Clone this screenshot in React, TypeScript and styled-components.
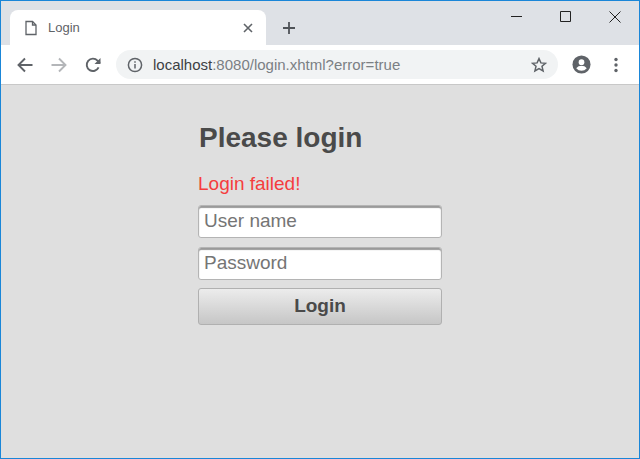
import * as React from "react";
import styled, { createGlobalStyle } from "styled-components";

const GlobalStyle = createGlobalStyle`
  html, body {
    margin: 0;
    padding: 0;
    height: 100%;
    overflow: hidden;
  }
  #root {
    height: 100%;
  }
`;

const Window = styled.div`
  box-sizing: border-box;
  width: 640px;
  height: 459px;
  display: flex;
  flex-direction: column;
  border: 1px solid #1a86d8;
  background: #dfdfdf;
  font-family: "Liberation Sans", Arial, sans-serif;
`;

const TabStrip = styled.div`
  height: 44px;
  flex: none;
  display: flex;
  align-items: flex-end;
  background: #dee1e6;
  padding-left: 9px;
`;

const Tab = styled.div`
  width: 256px;
  height: 35px;
  box-sizing: border-box;
  display: flex;
  align-items: center;
  padding: 0 13px 0 14px;
  background: #fff;
  border-radius: 8px 8px 0 0;
  font-size: 13px;
  color: #5f6368;
`;

const TabTitle = styled.span`
  flex: 1;
  margin-left: 10px;
`;

const NewTab = styled.div`
  width: 16px;
  height: 35px;
  margin-left: 16px;
  display: flex;
  align-items: center;
`;

const WindowControls = styled.div`
  margin-left: auto;
  align-self: flex-start;
  display: flex;
`;

const WindowButton = styled.div`
  width: 49px;
  height: 31px;
  display: flex;
  align-items: center;
  justify-content: center;
`;

const Toolbar = styled.div`
  height: 39px;
  flex: none;
  display: flex;
  align-items: center;
  background: #fff;
  border-bottom: 1px solid #c8c8c8;
  padding: 0 0 0 14px;
`;

const NavButton = styled.div`
  width: 20px;
  height: 20px;
  margin-right: 14px;
  display: flex;
  align-items: center;
  justify-content: center;
`;

const Omnibox = styled.div`
  width: 442px;
  height: 29px;
  margin-left: -1px;
  box-sizing: border-box;
  display: flex;
  align-items: center;
  padding: 0 11px;
  background: #f1f3f4;
  border-radius: 15px;
  font-size: 15px;
  color: #7b7f84;
`;

const Url = styled.span`
  flex: 1;
  margin-left: 10px;
`;

const Host = styled.span`
  color: #3c4043;
`;

const ToolbarEnd = styled.div`
  display: flex;
  align-items: center;
  margin-left: 14px;
  gap: 23px;
`;

const Page = styled.main`
  flex: 1;
  display: flex;
  justify-content: center;
`;

const LoginForm = styled.form`
  width: 244px;
  display: flex;
  flex-direction: column;
`;

const Heading = styled.h1`
  margin: 37px 0 0 1px;
  font-size: 28px;
  line-height: 32px;
  font-weight: bold;
  color: #4a4a4a;
`;

const ErrorMessage = styled.div`
  margin: 19px 0 1px;
  font-size: 19px;
  line-height: 22px;
  color: #f53d3d;
`;

const TextInput = styled.input`
  box-sizing: border-box;
  width: 100%;
  height: 33px;
  margin-top: 9px;
  padding: 0 5px 2px;
  border: 1px solid #b4b4b4;
  border-radius: 3px;
  box-shadow: inset 0 2px 1px #9a9a9a;
  background: #fff;
  font-family: inherit;
  font-size: 19px;
  outline: none;

  &::placeholder {
    color: #757575;
    opacity: 1;
  }
`;

const SubmitButton = styled.button`
  box-sizing: border-box;
  width: 100%;
  height: 37px;
  margin-top: 8px;
  padding: 0 0 2px;
  border: 1px solid #b0b0b0;
  border-radius: 3px;
  background: linear-gradient(#ececec, #c6c6c6);
  font-family: inherit;
  font-size: 19px;
  font-weight: bold;
  color: #4a4a4a;
`;

const App = () => {
  return (
    <Window>
      <GlobalStyle />
      <TabStrip>
        <Tab>
          <svg width="14" height="16" viewBox="0 0 14 16" fill="none" stroke="#5f6368" strokeWidth="1.3">
            <path d="M2 1.5h6.5l3.5 3.5v9.5H2z" />
            <path d="M8.5 1.5V5H12" />
          </svg>
          <TabTitle>Login</TabTitle>
          <svg width="10" height="10" viewBox="0 0 10 10" stroke="#5f6368" strokeWidth="1.6">
            <path d="M1 1l8 8M9 1l-8 8" />
          </svg>
        </Tab>
        <NewTab>
          <svg width="14" height="14" viewBox="0 0 14 14" stroke="#4f5358" strokeWidth="1.8">
            <path d="M7 1v12M1 7h12" />
          </svg>
        </NewTab>
        <WindowControls>
          <WindowButton>
            <svg width="11" height="11" viewBox="0 0 11 11" stroke="#222" strokeWidth="1">
              <path d="M0 5.5h11" />
            </svg>
          </WindowButton>
          <WindowButton>
            <svg width="11" height="11" viewBox="0 0 11 11" fill="none" stroke="#222" strokeWidth="1">
              <path d="M.5.5h10v10H.5z" />
            </svg>
          </WindowButton>
          <WindowButton>
            <svg width="12" height="12" viewBox="0 0 12 12" stroke="#222" strokeWidth="1">
              <path d="M.5.5l11 11M11.5.5l-11 11" />
            </svg>
          </WindowButton>
        </WindowControls>
      </TabStrip>
      <Toolbar>
        <NavButton>
          <svg width="16" height="16" viewBox="0 0 16 16" fill="none" stroke="#5f6368" strokeWidth="1.9">
            <path d="M15.5 8H1.5M8 1.5L1.5 8 8 14.5" />
          </svg>
        </NavButton>
        <NavButton>
          <svg width="16" height="16" viewBox="0 0 16 16" fill="none" stroke="#b4b6b9" strokeWidth="1.9">
            <path d="M.5 8h14M8 1.5L14.5 8 8 14.5" />
          </svg>
        </NavButton>
        <NavButton>
          <svg width="16" height="16" viewBox="0 0 16 16" fill="none">
            <path d="M13.6 10.4A6.2 6.2 0 1 1 12.5 3.6L15 6" stroke="#5f6368" strokeWidth="1.9" />
            <path d="M15.5 1v6h-6z" fill="#5f6368" />
          </svg>
        </NavButton>
        <Omnibox>
          <svg width="16" height="16" viewBox="0 0 16 16" fill="none" stroke="#5f6368" strokeWidth="1.5">
            <circle cx="8" cy="8" r="6.6" />
            <path d="M8 7v4.6M8 4.2v1.6" />
          </svg>
          <Url>
            <Host>localhost</Host>:8080/login.xhtml?error=true
          </Url>
          <svg width="16" height="16" viewBox="0 0 16 16" fill="none" stroke="#5f6368" strokeWidth="1.5">
            <path d="M8 1.6l1.9 4.3 4.6.4-3.5 3 1.1 4.6L8 11.5l-4.1 2.4L5 9.3l-3.5-3 4.6-.4z" />
          </svg>
        </Omnibox>
        <ToolbarEnd>
          <svg width="19" height="19" viewBox="0 0 20 20">
            <circle cx="10" cy="10" r="9.5" fill="#5f6368" />
            <circle cx="10" cy="7.5" r="3" fill="#fff" />
            <path d="M4.5 14c1.2-2 3.4-2.8 5.5-2.8s4.3.8 5.5 2.8a7 7 0 0 1-11 0z" fill="#fff" />
          </svg>
          <svg width="4" height="16" viewBox="0 0 4 16" fill="#5f6368">
            <circle cx="2" cy="2.5" r="1.7" />
            <circle cx="2" cy="8" r="1.7" />
            <circle cx="2" cy="13.5" r="1.7" />
          </svg>
        </ToolbarEnd>
      </Toolbar>
      <Page>
        <LoginForm onSubmit={(e) => e.preventDefault()}>
          <Heading>Please login</Heading>
          <ErrorMessage>Login failed!</ErrorMessage>
          <TextInput type="text" placeholder="User name" />
          <TextInput type="password" placeholder="Password" />
          <SubmitButton type="submit">Login</SubmitButton>
        </LoginForm>
      </Page>
    </Window>
  );
};

export default App;
